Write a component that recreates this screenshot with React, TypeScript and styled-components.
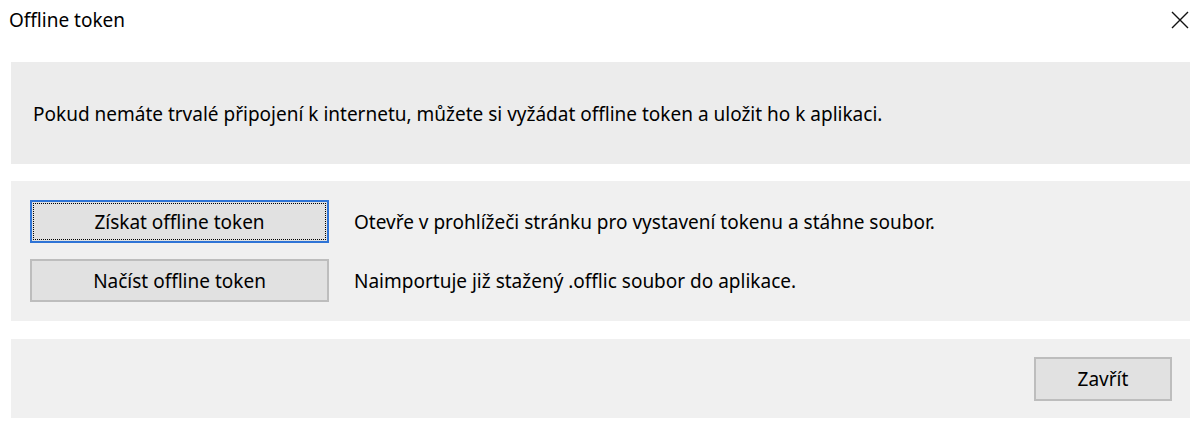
import * as React from 'react'
import styled, { createGlobalStyle } from 'styled-components'

const GlobalStyle = createGlobalStyle`
  html, body {
    margin: 0;
    padding: 0;
    background: #ffffff;
  }
  body {
    font-family: 'Noto Sans', 'Segoe UI', sans-serif;
    color: #000000;
  }
`

const Dialog = styled.div`
  width: 1200px;
  height: 431px;
  box-sizing: border-box;
  display: flex;
  flex-direction: column;
  padding: 0 10px 13px 11px;
`
const TitleBar = styled.div`
  height: 62px;
  display: flex;
  align-items: flex-start;
  justify-content: space-between;
`
const Title = styled.div`
  font-size: 19px;
  line-height: 22px;
  padding-top: 9px;
  margin-left: -2px;
`
const CloseButton = styled.button`
  border: 0;
  background: transparent;
  padding: 0;
  margin: 10px 0 0 0;
  width: 20px;
  height: 20px;
  cursor: pointer;
`
const Panel = styled.div<{ $shade?: string }>`
  background: ${p => p.$shade || '#f0f0f0'};
  box-sizing: border-box;
`
const InfoPanel = styled(Panel)`
  height: 102px;
  display: flex;
  align-items: center;
  padding-left: 22px;
  padding-top: 2px;
  font-size: 19px;
`
const ActionsPanel = styled(Panel)`
  margin-top: 17px;
  height: 140px;
  padding: 19px 19px 18px;
  display: flex;
  flex-direction: column;
  gap: 16px;
`
const ActionRow = styled.div`
  display: flex;
  align-items: center;
  gap: 25px;
  font-size: 19px;
`
const Button = styled.button<{ $focused?: boolean; $width: number }>`
  width: ${p => p.$width}px;
  height: 43px;
  box-sizing: border-box;
  background: #e1e1e1;
  border: ${p => (p.$focused ? '2px solid #2f74d6' : '2px solid #bdbdbd')};
  font-family: inherit;
  font-size: 19px;
  color: #000;
  padding: 0;
  position: relative;
  flex-shrink: 0;
  cursor: pointer;
  &::after {
    content: '';
    display: ${p => (p.$focused ? 'block' : 'none')};
    position: absolute;
    inset: 1px;
    border: 1px dotted #000;
  }
`
const FooterPanel = styled(Panel)`
  margin-top: 18px;
  flex: 1;
  display: flex;
  justify-content: flex-end;
  align-items: center;
  padding-right: 18px;
`

const CloseIcon = () => (
  <svg width="20" height="20" viewBox="0 0 20 20">
    <path d="M2 2 L18 18 M18 2 L2 18" stroke="#111" strokeWidth="1.4" fill="none" />
  </svg>
)

const App: React.FC = () => (
  <>
    <GlobalStyle />
    <Dialog>
      <TitleBar>
        <Title>Offline token</Title>
        <CloseButton aria-label="Zavřít">
          <CloseIcon />
        </CloseButton>
      </TitleBar>
      <InfoPanel $shade="#ececec">
        Pokud nemáte trvalé připojení k internetu, můžete si vyžádat offline token a uložit ho k aplikaci.
      </InfoPanel>
      <ActionsPanel>
        <ActionRow>
          <Button $focused $width={299}>Získat offline token</Button>
          <span>Otevře v prohlížeči stránku pro vystavení tokenu a stáhne soubor.</span>
        </ActionRow>
        <ActionRow>
          <Button $width={299}>Načíst offline token</Button>
          <span>Naimportuje již stažený .offlic soubor do aplikace.</span>
        </ActionRow>
      </ActionsPanel>
      <FooterPanel>
        <Button $width={138} style={{ height: 44 }}>Zavřít</Button>
      </FooterPanel>
    </Dialog>
  </>
)

export default App
